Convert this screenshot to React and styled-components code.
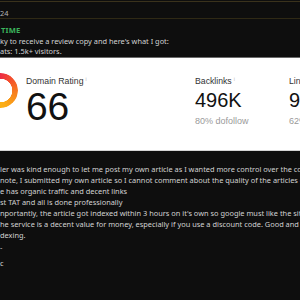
import styled, { createGlobalStyle } from "styled-components";

const GlobalStyle = createGlobalStyle`
  html, body {
    margin: 0;
    padding: 0;
    background: #0e0e0e;
    overflow: hidden;
  }
`;

const Page = styled.div`
  width: 300px;
  height: 300px;
  overflow: hidden;
  background: #0e0e0e;
  font-family: "Noto Sans", "Open Sans", sans-serif;
  color: #d2d2d2;
`;

const MetaRow = styled.div`
  margin-top: 1px;
  height: 18px;
  border-top: 1px solid #3a321c;
  border-bottom: 1px solid #2f2915;
  box-sizing: border-box;
  padding-top: 6px;
  font-size: 7.4px;
  line-height: 10px;
  color: #b4b4b4;
`;

const Tag = styled.div`
  margin-top: 5px;
  padding-left: 1px;
  font-size: 7.6px;
  line-height: 12px;
  font-weight: 700;
  color: #3bb45c;
  letter-spacing: 0.2px;
`;

const Line = styled.div`
  white-space: nowrap;
  font-size: 7.4px;
  line-height: ${(p) => p.$lh || 11}px;
  margin-top: ${(p) => p.$gap || 0}px;
`;

const Shot = styled.div`
  height: 94px;
  background: #ffffff;
  border-top: 1px solid #6a6a6a;
  border-bottom: 1px solid #d4d4d4;
  box-sizing: border-box;
  display: flex;
  align-items: flex-start;
  padding-top: 15px;
  font-family: "Liberation Sans", Arial, sans-serif;
  color: #111;
`;

const RatingGroup = styled.div`
  display: flex;
  align-items: flex-start;
  gap: 8px;
  margin-left: -17px;
  width: 212px;
  flex-shrink: 0;
`;

const Donut = styled.div`
  width: 35px;
  height: 35px;
  border-radius: 50%;
  flex-shrink: 0;
  background: conic-gradient(
    #ec2c45 0deg,
    #f4512c 45deg,
    #f7801e 100deg,
    #fbab16 160deg,
    #fdc015 238deg,
    #e6e6e6 238deg
  );
  -webkit-mask: radial-gradient(circle, transparent 11.5px, #000 12px);
  mask: radial-gradient(circle, transparent 11.5px, #000 12px);
`;

const Metric = styled.div`
  width: ${(p) => p.$w || "auto"};
  flex-shrink: 0;
  display: flex;
  flex-direction: column;
  padding-top: 3px;
`;

const Label = styled.div`
  font-size: 8.7px;
  line-height: 11px;
  color: #333;
  white-space: nowrap;
  display: flex;
  gap: 2px;
`;

const Info = styled.span`
  font-size: 5px;
  line-height: 6px;
  color: #bbb;
`;

const Big = styled.div`
  font-size: 39px;
  line-height: 39px;
  color: #111;
  margin-top: 0px;
  letter-spacing: -0.3px;
`;

const Value = styled.div`
  font-size: 20px;
  line-height: 20px;
  color: #111;
  margin-top: 3px;
  white-space: nowrap;
`;

const Sub = styled.div`
  font-size: 9px;
  line-height: 11px;
  color: #9a9a9a;
  margin-top: 6px;
  white-space: nowrap;
`;

const Body = styled.div`
  padding-top: 13px;
`;

export default function App() {
  return (
    <Page>
      <GlobalStyle />
      <MetaRow>24</MetaRow>
      <Tag>TIME</Tag>
      <Line $lh={10}>ky to receive a review copy and here's what I got:</Line>
      <Line>ats: 1.5k+ visitors.</Line>
      <Shot>
        <RatingGroup>
          <Donut />
          <Metric>
            <Label>
              Domain Rating<Info>i</Info>
            </Label>
            <Big>66</Big>
          </Metric>
        </RatingGroup>
        <Metric $w="94px">
          <Label>
            Backlinks<Info>i</Info>
          </Label>
          <Value>496K</Value>
          <Sub>80% dofollow</Sub>
        </Metric>
        <Metric>
          <Label>Linking websites</Label>
          <Value>9.6K</Value>
          <Sub>62% dofollow</Sub>
        </Metric>
      </Shot>
      <Body>
        <Line>ler was kind enough to let me post my own article as I wanted more control over the content</Line>
        <Line>note, I submitted my own article so I cannot comment about the quality of the articles on the site</Line>
        <Line>e has organic traffic and decent links</Line>
        <Line>st TAT and all is done professionally</Line>
        <Line>nportantly, the article got indexed within 3 hours on it's own so google must like the site</Line>
        <Line>he service is a decent value for money, especially if you use a discount code. Good and prompt</Line>
        <Line>dexing.</Line>
        <Line $gap={1}>-</Line>
        <Line $gap={5}>c</Line>
      </Body>
    </Page>
  );
}
